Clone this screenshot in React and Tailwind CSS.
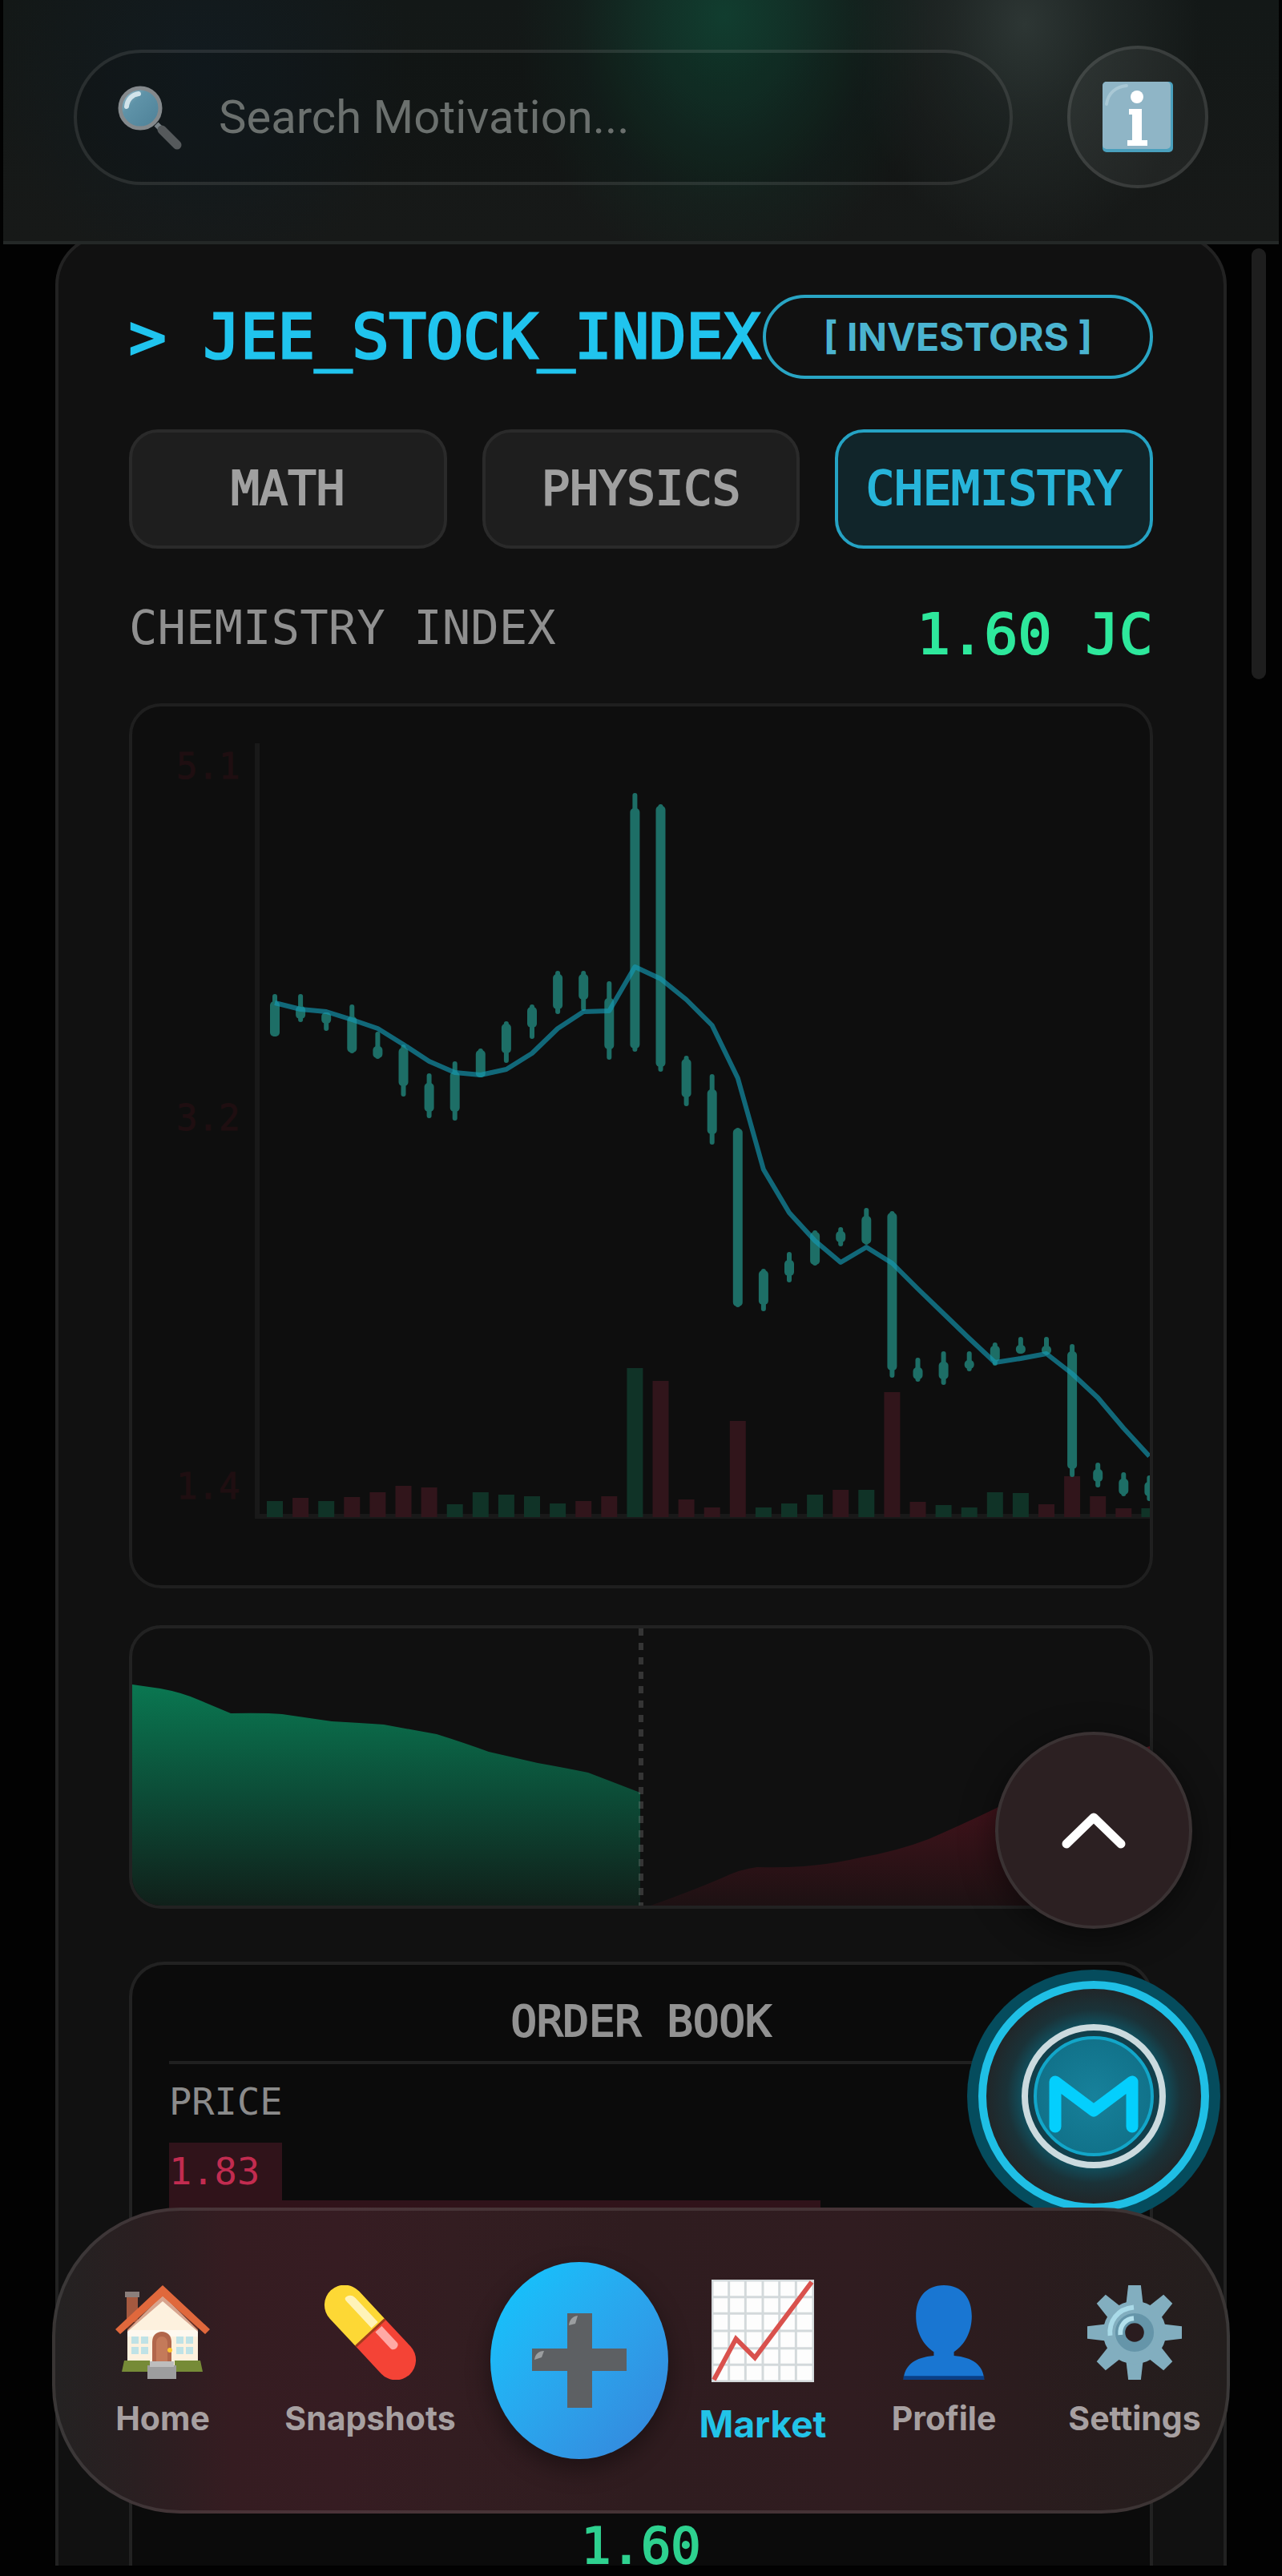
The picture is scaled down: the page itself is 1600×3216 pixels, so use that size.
import clsx from "clsx";

const GREEN = "#103327";
const RED = "#31151b";

// [high, bodyTop, bodyBottom, low, volume, volumeColor]
const CANDLES = [
  [1241, 1250, 1294, 1294, 20, GREEN],
  [1241, 1256, 1272, 1276, 24, RED],
  [1264, 1264, 1278, 1287, 20, GREEN],
  [1254, 1269, 1314, 1315, 25, RED],
  [1288, 1306, 1321, 1322, 31, RED],
  [1304, 1308, 1356, 1369, 39, RED],
  [1340, 1352, 1388, 1396, 37, RED],
  [1325, 1338, 1388, 1399, 16, GREEN],
  [1309, 1311, 1345, 1345, 31, GREEN],
  [1275, 1278, 1315, 1327, 28, GREEN],
  [1254, 1257, 1283, 1297, 26, GREEN],
  [1212, 1216, 1260, 1266, 17, GREEN],
  [1212, 1216, 1248, 1262, 20, RED],
  [1225, 1246, 1310, 1323, 26, RED],
  [990, 1009, 1309, 1313, 186, GREEN],
  [1004, 1006, 1332, 1338, 170, RED],
  [1318, 1322, 1370, 1381, 22, RED],
  [1341, 1360, 1416, 1429, 12, RED],
  [1408, 1409, 1631, 1632, 120, RED],
  [1584, 1586, 1629, 1637, 12, GREEN],
  [1563, 1573, 1593, 1601, 17, GREEN],
  [1536, 1538, 1579, 1580, 28, GREEN],
  [1532, 1537, 1551, 1556, 34, RED],
  [1508, 1518, 1553, 1554, 34, GREEN],
  [1512, 1514, 1711, 1720, 156, RED],
  [1695, 1707, 1722, 1725, 19, RED],
  [1687, 1700, 1722, 1729, 15, GREEN],
  [1687, 1698, 1709, 1712, 12, GREEN],
  [1676, 1680, 1700, 1705, 31, GREEN],
  [1669, 1679, 1690, 1690, 30, GREEN],
  [1669, 1680, 1691, 1692, 16, RED],
  [1678, 1687, 1834, 1844, 51, RED],
  [1826, 1834, 1850, 1857, 26, RED],
  [1838, 1846, 1866, 1868, 11, RED],
  [1842, 1850, 1868, 1874, 11, GREEN],
];

const AVERAGE = [
  1252, 1260, 1263, 1273, 1284, 1304, 1325, 1339, 1342, 1335, 1315, 1284, 1263, 1262, 1207, 1222, 1248, 1280,
  1346, 1460, 1514, 1549, 1576, 1557, 1577, 1609, 1640, 1671, 1701, 1696, 1690, 1715, 1745, 1783, 1818,
];

const candleX = (i) => 343 + i * 32.1;

function SearchIcon() {
  return (
    <svg viewBox="0 0 80 80" className="w-20 h-20 shrink-0">
      <defs>
        <linearGradient id="lens" x1="0" y1="0" x2="1" y2="1">
          <stop offset="0" stopColor="#a9cbd8" />
          <stop offset="0.35" stopColor="#5f93a8" />
          <stop offset="1" stopColor="#4d8097" />
        </linearGradient>
      </defs>
      <path d="M48 48l8 8" stroke="#7a8388" strokeWidth="7" />
      <path d="M55 55l19 19" stroke="#55595b" strokeWidth="11" strokeLinecap="round" />
      <circle cx="28" cy="28" r="25" fill="url(#lens)" stroke="#84898c" strokeWidth="5" />
      <path d="M11 26c1-9 7-15 15-16" stroke="#d2e4ea" strokeWidth="6" strokeLinecap="round" fill="none" />
    </svg>
  );
}

function InfoIcon() {
  return (
    <svg viewBox="0 0 88 88" className="w-[88px] h-[88px]">
      <rect width="88" height="88" rx="5" fill="#4aa0bd" />
      <rect width="85" height="84" rx="5" fill="#8fb5c6" />
      <path d="M5 28C7 14 17 6 30 5" stroke="#a9c8d5" strokeWidth="4" fill="none" strokeLinecap="round" />
      <circle cx="43" cy="19" r="8" fill="#fff" />
      <path d="M33 34h16v39h7v7H31v-7h6V41h-4z" fill="#fff" />
    </svg>
  );
}

function HomeIcon() {
  return (
    <svg viewBox="0 0 118 118" className="w-[118px] h-[118px]">
      <path d="M14 10h14v36H14z" fill="#a5593f" />
      <path d="M12 8h18v7H12z" fill="#8b7f7c" />
      <path d="M59 12l44 44v48H15V56z" fill="#fdf1de" />
      <path d="M15 56h88v8H15z" fill="#fff" opacity=".5" />
      <path d="M59 0l59 55-6 6-53-47L6 61l-6-6z" fill="#e0683c" />
      <path d="M59 14l44 39v5L59 20 15 58v-5z" fill="#a8462c" opacity=".45" />
      <path d="M20 64h9v9h-9zm12 0h9v9h-9zM20 77h9v9h-9zm12 0h9v9h-9zM76 64h9v9h-9zm12 0h9v9h-9zM76 77h9v9h-9zm12 0h9v9h-9z" fill="#bfe2e6" />
      <path d="M46 100V71c0-8 5-13 12-13s12 5 12 13v29z" fill="#b1664b" />
      <path d="M51 98V72c0-5 3-8 7-8s7 3 7 8v26z" fill="#c47a5a" />
      <circle cx="68" cy="81" r="3" fill="#ffc730" />
      <path d="M11 94h32v14H8zM74 94h32l3 14H74z" fill="#768b37" />
      <path d="M40 100h36v17H40z" fill="#9d9d9e" />
      <path d="M43 95h30v7H43z" fill="#bdbdbd" />
    </svg>
  );
}

function PillIcon() {
  return (
    <svg viewBox="0 0 118 118" className="w-[118px] h-[118px]">
      <g transform="rotate(-43 59 59)">
        <path d="M34 59V12a25 25 0 0 1 50 0v47z" fill="#fdd835" />
        <path d="M34 59v47a25 25 0 0 0 50 0V59z" fill="#f44336" />
        <path d="M34 58h50v3H34z" fill="#a33a1c" />
        <path d="M67 6c5 0 8 4 8 9v41H64V15c0-4-1-9 3-9z" fill="#fff3b8" />
        <path d="M64 63h11v28c0 6-11 6-11 0z" fill="#ffa9a5" />
      </g>
    </svg>
  );
}

function PlusIcon() {
  return (
    <svg viewBox="0 0 118 118" className="w-[118px] h-[118px]">
      <path d="M44 0h31v44h43v28H75v46H44V72H0V44h44z" fill="#5d6063" />
      <path d="M46 15c1-7 4-11 11-12l-3 10zM3 58c1-7 5-11 12-11l-3 8z" fill="#9b9ea0" />
    </svg>
  );
}

function MarketIcon() {
  return (
    <svg viewBox="0 0 130 130" className="w-[128px] h-[128px]">
      <rect width="130" height="130" fill="#fdfdfd" />
      <path d="M1 0v130M22 0v130M43 0v130M65 0v130M86 0v130M107 0v130M129 0v130M0 1h130M0 22h130M0 43h130M0 65h130M0 87h130M0 108h130M0 129h130" stroke="#d3d9db" strokeWidth="3" />
      <path d="M3 127l28-52 24 24L127 3" stroke="#d9514d" strokeWidth="6" fill="none" />
    </svg>
  );
}

function ProfileIcon() {
  return (
    <svg viewBox="0 0 118 122" className="w-[118px] h-[118px]">
      <path d="M59 0c24 0 36 17 36 40 0 20-9 37-23 46v5c24 2 38 12 39 31H7c1-19 15-29 39-31v-5C32 77 23 60 23 40 23 17 35 0 59 0z" fill="#1976d2" />
      <path d="M7 117h104v5H7z" fill="#0a3f86" />
    </svg>
  );
}

function SettingsIcon() {
  return (
    <svg viewBox="0 0 120 120" className="w-[118px] h-[118px]">
      <g fill="#82aebf">
        {[0, 45, 90, 135, 180, 225, 270, 315].map((a) => (
          <path key={a} d="M52 0h16l3 26H49z" transform={`rotate(${a} 60 60)`} />
        ))}
        <circle cx="60" cy="60" r="40" />
      </g>
      <circle cx="60" cy="60" r="18" fill="none" stroke="#6595a9" strokeWidth="13" />
      <path d="M29 64c-2-18 9-34 30-36" stroke="#a9dae8" strokeWidth="6" fill="none" />
      <path d="M42 63c-1-12 6-20 17-21" stroke="#b3e0ec" strokeWidth="6" fill="none" />
      <circle cx="60" cy="60" r="12" fill="#2a1c1f" />
    </svg>
  );
}

function LogoBadge() {
  return (
    <svg viewBox="-159 -159 318 318" className="w-[318px] h-[318px]">
      <defs>
        <radialGradient id="glow">
          <stop offset="0.6" stopColor="#0f5666" />
          <stop offset="0.78" stopColor="#1a3238" />
          <stop offset="1" stopColor="#222426" />
        </radialGradient>
        <radialGradient id="core">
          <stop offset="0" stopColor="#17819b" />
          <stop offset="1" stopColor="#11728a" />
        </radialGradient>
      </defs>
      <circle r="158" fill="#054c5d" />
      <circle r="139" fill="url(#glow)" stroke="#1fbfe5" strokeWidth="10" />
      <circle r="86" fill="#123f4b" stroke="#cbdade" strokeWidth="8" />
      <circle r="73" fill="url(#core)" stroke="#12a6c9" strokeWidth="4" />
      <path d="M-48 38V-18L0 18L48-18V38" fill="none" stroke="#04cffd" strokeWidth="15" strokeLinecap="round" strokeLinejoin="round" />
    </svg>
  );
}

function PriceChart() {
  const line = AVERAGE.map((y, i) => `${candleX(i)},${y}`).join(" ");
  return (
    <svg viewBox="165 882 1270 1097" className="block w-full h-auto">
      <path d="M321 928V1893H1435" stroke="#191919" strokeWidth="6" fill="none" />
      <g fill="#1f0e11" stroke="#1f0e11" strokeWidth="1" fontFamily="'DejaVu Sans Mono', monospace" fontSize="44">
        <text x="220" y="972">5.1</text>
        <text x="220" y="1411">3.2</text>
        <text x="220" y="1871">1.4</text>
      </g>
      {CANDLES.map(([, , , , volume, color], i) => (
        <rect key={i} x={candleX(i) - 10} y={1894 - volume} width="20" height={volume} fill={color} />
      ))}
      {CANDLES.map(([high, top, bottom, low], i) => (
        <g key={i} fill="#1d6e66">
          <rect x={candleX(i) - 3} y={high} width="6" height={low - high} rx="3" />
          <rect x={candleX(i) - 6} y={top} width="12" height={bottom - top} rx="5" />
        </g>
      ))}
      <polyline points={line} stroke="#149ab4" strokeOpacity=".65" strokeWidth="6" strokeLinejoin="round" fill="none" />
    </svg>
  );
}

function DepthChart() {
  return (
    <svg viewBox="165 2033 1270 346" className="block w-full h-auto">
      <defs>
        <linearGradient id="bids" x1="0" y1="0" x2="0" y2="1">
          <stop offset="0" stopColor="#0a7751" />
          <stop offset="0.5" stopColor="#0c4c37" />
          <stop offset="1" stopColor="#10201a" />
        </linearGradient>
        <linearGradient id="asks" x1="0" y1="0" x2="0" y2="1">
          <stop offset="0" stopColor="#55141f" />
          <stop offset="1" stopColor="#1d1113" />
        </linearGradient>
      </defs>
      <path d="M165 2103L200 2108Q228 2113 250 2123L288 2139Q330 2138 352 2140L414 2149Q450 2151 479 2153L545 2165Q580 2176 610 2187L671 2201Q705 2207 734 2213L799 2238V2379H165z" fill="url(#bids)" />
      <path d="M812 2379Q860 2362 900 2345Q925 2333 945 2331Q975 2332 1003 2330Q1040 2327 1074 2319Q1120 2311 1159 2296Q1205 2276 1244 2257Q1340 2210 1435 2180V2379z" fill="url(#asks)" />
      <path d="M800 2033V2379" stroke="#8a8a8a" strokeOpacity=".3" strokeWidth="6" strokeDasharray="9 9" />
    </svg>
  );
}

const NAV_ITEMS = [
  { label: "Home", Icon: HomeIcon },
  { label: "Snapshots", Icon: PillIcon },
  { label: "Add", Icon: PlusIcon, primary: true },
  { label: "Market", Icon: MarketIcon, active: true },
  { label: "Profile", Icon: ProfileIcon },
  { label: "Settings", Icon: SettingsIcon },
];

function BottomNav() {
  return (
    <nav className="absolute bottom-[78px] inset-x-[65px] h-[382px] px-[5px] grid grid-cols-[258fr_260fr_262fr_196fr_256fr_220fr] rounded-[160px] border-4 border-white/10 bg-[linear-gradient(90deg,#242222_0%,#2a1f21_7%,#351c21_15%,#361c22_24%,#331d21_34%,#2f1c1f_50%,#301c20_68%,#2b1c1e_82%,#231e1d_100%)] bg-clip-border">
      {NAV_ITEMS.map(({ label, Icon, primary, active }) =>
        primary ? (
          <button key={label} aria-label={label} className="justify-self-center mt-16 w-[222px] h-[246px] flex items-center justify-center rounded-[50%] bg-linear-to-br from-[#06c8ff] to-[#3583da] shadow-[0_12px_30px_#00000066]">
            <Icon />
          </button>
        ) : (
          <button key={label} className={clsx("flex flex-col items-center font-bold", active ? "pt-[86px] gap-6 text-[#22c3e8] text-[46px]" : "pt-[93px] gap-5 text-[#a7a0a1] text-[41px]")}>
            <Icon />
            <span className="leading-[56px]">{label}</span>
          </button>
        )
      )}
    </nav>
  );
}

const App = () => {
  const subjects = ["MATH", "PHYSICS", "CHEMISTRY"];

  return (
    <div className="min-h-screen relative bg-[#020202] pb-[13px] overflow-hidden font-['Inter',sans-serif]">
      {/* Header */}
      <header className="relative z-10 mx-1 h-[305px] pt-[57px] px-[88px] flex items-start gap-[68px] border-b-[4px] border-[#242827] bg-[radial-gradient(ellipse_260px_330px_at_900px_20px,#113d2f_0%,#113d2fb0_30%,#113d2f30_70%,#113d2f00_100%),radial-gradient(ellipse_220px_280px_at_1275px_30px,#2d3634_0%,#2d363480_40%,#2d363400_100%),radial-gradient(ellipse_260px_260px_at_250px_90px,#121b20_0%,#121b2000_100%),linear-gradient(180deg,#131817,#171918)]">
        <label className="mt-[5px] h-[169px] flex-1 flex items-center gap-[46px] pl-[51px] rounded-full border-4 border-white/10 bg-black/10">
          <SearchIcon />
          <input
            type="text"
            aria-label="Search"
            placeholder="Search Motivation..."
            className="flex-1 min-w-0 bg-transparent outline-none font-['Roboto',sans-serif] text-[58px] text-white placeholder:text-[#6b706e]"
          />
        </label>
        <button aria-label="Info" className="w-[176px] h-[178px] flex items-center justify-center rounded-full border-4 border-white/10 bg-white/5">
          <InfoIcon />
        </button>
      </header>

      {/* Stock index card */}
      <main className="relative -mt-[13px] mx-[69px] px-[88px] pt-[72px] rounded-t-[64px] border-4 border-b-0 border-[#222222] bg-[#111111] font-['DejaVu_Sans_Mono',monospace]">
        <div className="h-[105px] flex items-center justify-between">
          <h1 className="text-[77px] whitespace-nowrap text-[#20c4ee] [-webkit-text-stroke:3px]">&gt; JEE_STOCK_INDEX</h1>
          <button className="h-full w-[487px] shrink-0 rounded-full border-4 border-[#29a5c4] font-['Inter',sans-serif] font-bold text-[48px] text-[#4bb4d0]">
            [ INVESTORS ]
          </button>
        </div>

        <div className="mt-[63px] grid grid-cols-3 gap-11">
          {subjects.map((s) => (
            <button
              key={s}
              className={clsx(
                "h-[149px] rounded-[36px] border-4 text-[59px] [-webkit-text-stroke:2px]",
                s === "CHEMISTRY" ? "border-[#25a3c4] bg-[#11252a] text-[#27b5da]" : "border-[#2a2a2a] bg-[#1e1e1e] text-[#a0a0a0]"
              )}
            >
              {s}
            </button>
          ))}
        </div>

        <div className="mt-16 h-[84px] flex items-start justify-between">
          <span className="text-[59px] leading-[69px] text-[#909090]">CHEMISTRY INDEX</span>
          <span className="text-[70px] leading-[86px] text-[#2ee89c] [-webkit-text-stroke:2px]">1.60 JC</span>
        </div>

        <div className="mt-[45px] rounded-[40px] border-4 border-[#1f1f1f] bg-[#0e0e0e] overflow-hidden">
          <PriceChart />
        </div>

        <div className="mt-[46px] rounded-[40px] border-4 border-[#222222] bg-[#101010] overflow-hidden">
          <DepthChart />
        </div>

        {/* Order book */}
        <section className="mt-[66px] h-[754px] px-[46px] flex flex-col rounded-t-[44px] border-4 border-b-0 border-[#222222] bg-[#0b0b0b]">
          <h2 className="pt-[41px] pb-[19px] border-b-4 border-[#202020] text-center text-[54px] leading-[60px] text-[#929292] [-webkit-text-stroke:2px]">ORDER BOOK</h2>
          <table className="w-full text-left text-[47px]">
            <thead>
              <tr>
                <th className="h-[98px] pb-1 font-normal text-[#8b8b8b]">PRICE</th>
              </tr>
            </thead>
            <tbody>
              <tr>
                <td className="h-[72px] p-0 text-[#c22c50]">
                  <span className="w-[141px] h-[72px] flex items-center bg-[#30131a]">1.83</span>
                </td>
              </tr>
            </tbody>
          </table>
          <div className="w-[69%] h-[72px] bg-[#30131a]"></div>
          <p className="mt-auto text-center text-[62px] leading-[48px] text-[#2ed18f] [-webkit-text-stroke:2px]">1.60</p>
        </section>
      </main>

      {/* Scrollbar thumb */}
      <div className="absolute top-[310px] right-5 w-[18px] h-[538px] rounded-full bg-[#1e1e1e]"></div>

      {/* Floating buttons */}
      <div className="absolute bottom-[440px] right-[76px] flex flex-col items-center gap-[50px]">
        <button aria-label="Scroll to top" className="w-[246px] h-[246px] flex items-center justify-center rounded-full border-4 border-[#3a3233] bg-[#2c2022] shadow-[0_10px_40px_#00000080]">
          <svg viewBox="0 0 100 60" className="w-[100px] h-[60px]">
            <path d="M16 47L50 14L84 47" stroke="#fff" strokeWidth="11" strokeLinecap="round" strokeLinejoin="round" fill="none" />
          </svg>
        </button>
        <button aria-label="Motivation">
          <LogoBadge />
        </button>
      </div>

      <BottomNav />
    </div>
  );
};
export default App;
